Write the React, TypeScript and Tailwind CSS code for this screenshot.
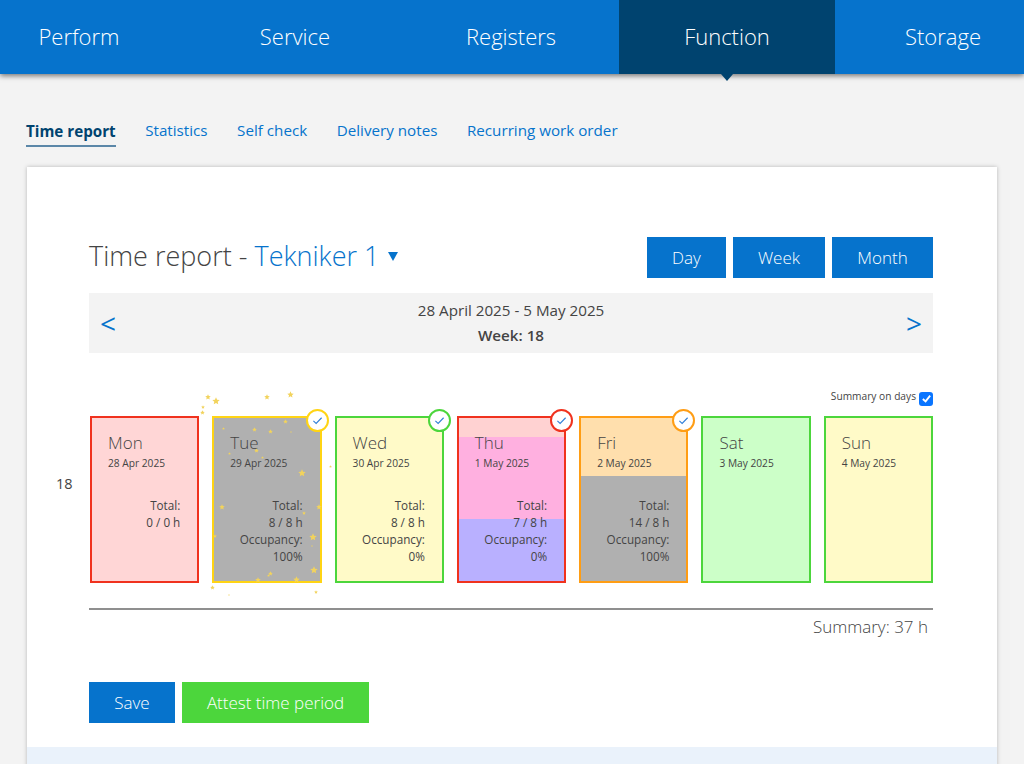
import React from "react";

const font = "font-['Open_Sans',sans-serif]";

const navItems = ["Perform", "Service", "Registers", "Function", "Storage"];
const tabs = ["Time report", "Statistics", "Self check", "Delivery notes", "Recurring work order"];

type Day = {
  name: string;
  date: string;
  border: string;
  ring?: string;
  segments: { color: string; height: string }[];
  total?: string;
  occupancy?: string;
};

const days: Day[] = [
  { name: "Mon", date: "28 Apr 2025", border: "border-[#f0321e]", segments: [{ color: "bg-[#ffd6d6]", height: "flex-1" }], total: "0 / 0 h" },
  { name: "Tue", date: "29 Apr 2025", border: "border-[#ffd414]", ring: "border-[#ffd414]", segments: [{ color: "bg-[#b0b0b0]", height: "flex-1" }], total: "8 / 8 h", occupancy: "100%" },
  { name: "Wed", date: "30 Apr 2025", border: "border-[#4cd63c]", ring: "border-[#4cd63c]", segments: [{ color: "bg-[#fffac8]", height: "flex-1" }], total: "8 / 8 h", occupancy: "0%" },
  {
    name: "Thu",
    date: "1 May 2025",
    border: "border-[#f0321e]",
    ring: "border-[#f0321e]",
    segments: [
      { color: "bg-[#ffd2d2]", height: "h-[19px]" },
      { color: "bg-[#ffb0e0]", height: "h-[82px]" },
      { color: "bg-[#b9b0ff]", height: "flex-1" },
    ],
    total: "7 / 8 h",
    occupancy: "0%",
  },
  {
    name: "Fri",
    date: "2 May 2025",
    border: "border-[#ff9d14]",
    ring: "border-[#ff9d14]",
    segments: [
      { color: "bg-[#ffdfad]", height: "h-[58px]" },
      { color: "bg-[#b0b0b0]", height: "flex-1" },
    ],
    total: "14 / 8 h",
    occupancy: "100%",
  },
  { name: "Sat", date: "3 May 2025", border: "border-[#4cd63c]", segments: [{ color: "bg-[#ccffc8]", height: "flex-1" }] },
  { name: "Sun", date: "4 May 2025", border: "border-[#4cd63c]", segments: [{ color: "bg-[#fffac8]", height: "flex-1" }] },
];

// confetti stars around the Tuesday card: centre x, centre y (relative to the card's inner box), size
const stars = [
  [-6, -21, 6], [2, -17, 8], [-11, -11, 4], [-12, -6, 5], [53, -21, 6], [76, -24, 7],
  [9, 10, 3], [40, 11, 5], [56, 13, 5], [71, 3, 5], [77, 14, 2], [15, 35, 3],
  [42, 32, 5], [48, 39, 3], [88, 55, 8], [8, 89, 6], [90, 95, 4], [105, 89, 6],
  [1, 118, 4], [99, 119, 8], [98, 128, 2], [100, 152, 8], [56, 155, 5], [54, 157, 3],
  [44, 162, 6], [82, 161, 7], [-2, 169, 5], [102, 174, 4], [116, 48, 3], [15, 177, 2],
];

const Star = ({ cx, cy, s }: { cx: number; cy: number; s: number }) => (
  <svg
    className="absolute pointer-events-none"
    style={{ left: cx - s / 2, top: cy - s / 2, width: s, height: s }}
    viewBox="0 0 24 24"
  >
    <path fill="#f2d35c" d="M12 1l3.2 7.3 7.8.8-5.9 5.2 1.7 7.7L12 18l-6.8 4 1.7-7.7L1 9.1l7.8-.8z" />
  </svg>
);

const DayCard = ({ day }: { day: Day }) => (
  <div className={`relative flex-1 h-[167px] border-2 ${day.border}`}>
    <div className="absolute inset-0 flex flex-col">
      {day.segments.map((seg, i) => (
        <div key={i} className={`${seg.color} ${seg.height}`} />
      ))}
    </div>
    <div className="relative h-full flex flex-col text-[#444] pl-[16px] pr-[17px]">
      <div className="text-[17px] font-light leading-[24px] mt-[13px]">{day.name}</div>
      <div className="text-[10.2px] leading-[14px] mt-[1px]">{day.date}</div>
      <div className="mt-[27px] text-right text-[11.7px] leading-[17px]">
        {day.total && (
          <>
            <div>Total:</div>
            <div>{day.total}</div>
          </>
        )}
        {day.occupancy && (
          <>
            <div>Occupancy:</div>
            <div>{day.occupancy}</div>
          </>
        )}
      </div>
    </div>
    {day.ring && (
      <div className={`absolute -top-[9px] -right-[9px] w-[23px] h-[23px] rounded-full bg-white border-2 ${day.ring} flex items-center justify-center`}>
        <svg viewBox="0 0 12 12" className="w-[11px] h-[11px]" fill="none" stroke="#2f7fd8" strokeWidth="1.2">
          <path d="M1.5 6.5 L4.5 9.2 L10.5 3" />
        </svg>
      </div>
    )}
    {day.name === "Tue" && stars.map(([cx, cy, s], i) => <Star key={i} cx={cx} cy={cy} s={s} />)}
  </div>
);

const App = () => {
  return (
    <div className={`${font} h-[764px] overflow-hidden bg-[#f3f3f3]`}>
      <nav className="relative z-10 h-[74px] bg-[#0673cc] flex justify-center overflow-visible shadow-[0_2px_5px_rgba(0,0,0,0.5)]">
        <div className="flex -translate-x-[1px]">
          {navItems.map((item) => (
            <div
              key={item}
              className={`relative w-[216px] shrink-0 flex items-center justify-center pb-[2px] text-white text-[22px] font-light ${
                item === "Function" ? "bg-[#00436f]" : ""
              }`}
            >
              {item}
              {item === "Function" && (
                <div className="absolute top-full left-1/2 -translate-x-1/2 w-0 h-0 border-x-[6px] border-x-transparent border-t-[7px] border-t-[#00436f]" />
              )}
            </div>
          ))}
        </div>
      </nav>

      <div className="flex gap-[29.5px] pl-[26px] pt-[46px] text-[15.2px] leading-[21px]">
        {tabs.map((tab, i) => (
          <div
            key={tab}
            className={i === 0 ? "font-bold leading-[22px] text-[#00436f] border-b-2 border-[#5b87a8] pb-[3px] h-[27px]" : "text-[#0673cc] h-[27px]"}
          >
            {tab}
          </div>
        ))}
      </div>

      <main className="mx-[27px] mt-[20px] bg-white shadow-[0_0_4px_rgba(0,0,0,0.25)] h-[600px]">
        <div className="pl-[62px] pr-[64px] pt-[70px] h-[580px]">
          <div className="flex justify-between items-start">
            <h1 className="text-[27px] font-light text-[#444] leading-[38px] flex items-center">
              Time report -&nbsp;<span className="text-[#0673cc]">Tekniker 1</span>
              <span className="ml-[9px] mt-[1px] w-0 h-0 border-x-[5px] border-x-transparent border-t-[9px] border-t-[#0673cc]" />
            </h1>
            <div className="flex gap-[7px] text-white text-[17px] font-light">
              <button className="w-[79px] h-[41px] pt-[1px] bg-[#0673cc]">Day</button>
              <button className="w-[92px] h-[41px] pt-[1px] bg-[#0673cc]">Week</button>
              <button className="w-[101px] h-[41px] pt-[1px] bg-[#0673cc]">Month</button>
            </div>
          </div>

          <div className="mt-[15px] h-[60px] bg-[#f3f3f3] flex items-center justify-between px-[11px]">
            <span className="text-[#0673cc] text-[28px] leading-none">&lt;</span>
            <div className="text-center text-[#444] text-[15.2px] leading-[25px]">
              <div>28 April 2025 - 5 May 2025</div>
              <div className="font-semibold">Week: 18</div>
            </div>
            <span className="text-[#0673cc] text-[28px] leading-none">&gt;</span>
          </div>

          <div className="mt-[37px] h-[17px] flex items-center justify-end gap-[3px] text-[#444] text-[10.2px]">
            <span className="-mt-[3px]">Summary on days</span>
            <span className="w-[14px] h-[14px] rounded-[3px] bg-[#0a75ff] flex items-center justify-center">
              <svg viewBox="0 0 12 12" className="w-[11px] h-[11px]" fill="none" stroke="white" strokeWidth="2">
                <path d="M2 6.5 L5 9.2 L10 2.8" />
              </svg>
            </span>
          </div>

          <div className="mt-[9px] flex items-center">
            <div className="-ml-[33px] w-[33px] mb-[32px] text-[14.5px] text-[#444]">18</div>
            <div className="flex-1 flex gap-[13px] pl-[1px]">
              {days.map((day) => (
                <DayCard key={day.name} day={day} />
              ))}
            </div>
          </div>

          <div className="mt-[25px] border-t-2 border-[#8f8f8f]" />
          <div className="mt-[5px] text-right pr-[5px] text-[17px] font-light text-[#444] leading-[24px]">Summary: 37 h</div>

          <div className="mt-[43px] flex gap-[7px] text-white text-[17px] font-light">
            <button className="w-[86px] h-[41px] pt-[1px] bg-[#0673cc]">Save</button>
            <button className="w-[187px] h-[41px] pt-[1px] bg-[#4cd63c]">Attest time period</button>
          </div>
        </div>
        <div className="h-[20px] bg-[#eaf2fb]" />
      </main>
    </div>
  );
};

export default App;
